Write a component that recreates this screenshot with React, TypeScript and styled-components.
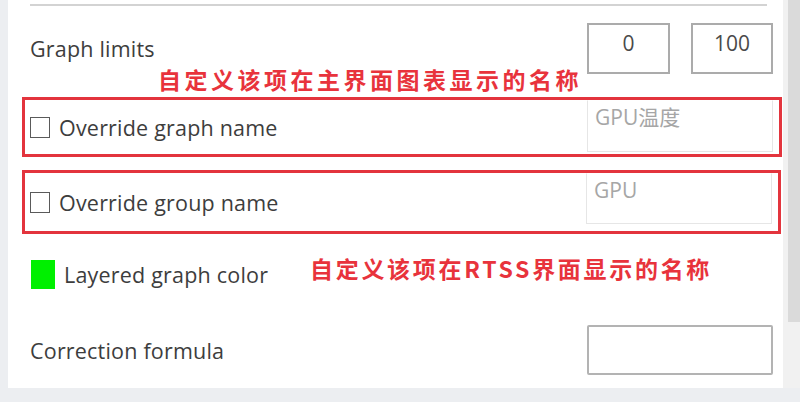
import React from 'react';
import styled, { createGlobalStyle } from 'styled-components';

const GlobalStyle = createGlobalStyle`
  html, body { margin: 0; padding: 0; background: #eceef1; }
  body { width: 800px; height: 402px; overflow: hidden; }
  * { box-sizing: border-box; }
`;

const Window = styled.div`
  width: 800px;
  height: 402px;
  display: flex;
  padding: 0 0 14px 8px;
  background: #eceef1;
`;

const Panel = styled.div`
  position: relative;
  flex: 1;
  display: flex;
  flex-direction: column;
  padding: 4px 1px 0 14px;
  background: #ffffff;
  font-family: "Open Sans", "Noto Sans", sans-serif;
  color: #3d3d3d;
`;

const ScrollTrack = styled.div`
  width: 17px;
  display: flex;
  flex-direction: column;
  align-items: flex-end;
  background: #f1f1f1;
`;

const ScrollThumb = styled.div`
  width: 12px;
  height: 322px;
  background: #dadada;
`;

const Divider = styled.div`
  height: 2px;
  margin: 0 15px 0 8px;
  background: #d3d3d3;
`;

const Row = styled.div<{ $mt: number; $h: number; $pl: number; $pr: number }>`
  display: flex;
  align-items: center;
  margin-top: ${(p) => p.$mt}px;
  height: ${(p) => p.$h}px;
  padding: 0 ${(p) => p.$pr}px 0 ${(p) => p.$pl}px;
`;

const Label = styled.span<{ $w?: number }>`
  font-size: 21.5px;
  letter-spacing: 0.2px;
  white-space: nowrap;
  ${(p) => (p.$w ? `width: ${p.$w}px; flex: none;` : '')}
`;

const Spacer = styled.div`
  flex: 1;
`;

const LimitBox = styled.div<{ $w: number; $ml?: number }>`
  width: ${(p) => p.$w}px;
  height: 51px;
  margin-left: ${(p) => p.$ml ?? 0}px;
  border: 2px solid #ababab;
  display: flex;
  justify-content: center;
  padding-top: 4px;
  font-size: 21px;
  line-height: 28px;
  color: #4a4a4a;
`;

const RedFrame = styled.div<{ $h: number }>`
  flex: 1;
  display: flex;
  align-items: center;
  height: ${(p) => p.$h}px;
  border: 3px solid #e3343d;
  padding: 0 6px 0 5px;
`;

const CheckBox = styled.div`
  width: 20px;
  height: 21px;
  border: 1.5px solid #5a5a5a;
  background: #fff;
  margin-right: 9px;
  flex: none;
`;

const NameInput = styled.div<{ $h: number; $mb: number }>`
  align-self: flex-start;
  width: 186px;
  height: ${(p) => p.$h}px;
  margin-bottom: ${(p) => p.$mb}px;
  border: 1px solid #e6e6e6;
  border-top-color: transparent;
  padding: 2px 0 0 7px;
  font-family: "Open Sans", "Noto Sans CJK SC", sans-serif;
  font-size: 21px;
  line-height: 28px;
  color: #a6a6a6;
`;

const Swatch = styled.div`
  width: 24px;
  height: 29px;
  background: #00f000;
  margin-right: 9px;
  flex: none;
`;

const Annotation = styled.span<{ $ls: number }>`
  font-family: "Noto Sans CJK SC", sans-serif;
  font-weight: 700;
  font-size: 23px;
  line-height: 26px;
  letter-spacing: ${(p) => p.$ls}px;
  color: #e8333c;
  white-space: nowrap;
`;

const TopAnnotation = styled(Annotation)`
  position: absolute;
  left: 150px;
  top: 66px;
`;

const SideAnnotation = styled(Annotation)`
  margin: -12px 0 0 -2px;
`;

const FormulaBox = styled.div`
  width: 186px;
  height: 50px;
  border: 2px solid #b3b3b3;
  border-radius: 2px;
`;

export default function App() {
  return (
    <>
      <GlobalStyle />
      <Window>
        <Panel>
          <Divider />
          <Row $mt={17} $h={51} $pl={8} $pr={9}>
            <Label>Graph limits</Label>
            <Spacer />
            <LimitBox $w={83}>0</LimitBox>
            <LimitBox $w={82} $ml={21}>100</LimitBox>
          </Row>
          <TopAnnotation $ls={3.5}>自定义该项在主界面图表显示的名称</TopAnnotation>

          <Row $mt={23} $h={60} $pl={0} $pr={0}>
            <RedFrame $h={60}>
              <CheckBox />
              <Label>Override graph name</Label>
              <Spacer />
              <NameInput $h={52} $mb={2}>GPU温度</NameInput>
            </RedFrame>
          </Row>

          <Row $mt={13} $h={64} $pl={0} $pr={1}>
            <RedFrame $h={64}>
              <CheckBox />
              <Label>Override group name</Label>
              <Spacer />
              <NameInput $h={51} $mb={7}>GPU</NameInput>
            </RedFrame>
          </Row>

          <Row $mt={22} $h={36} $pl={9} $pr={0}>
            <Swatch />
            <Label $w={248}>Layered graph color</Label>
            <SideAnnotation $ls={2.7}>自定义该项在RTSS界面显示的名称</SideAnnotation>
          </Row>

          <Row $mt={33} $h={50} $pl={8} $pr={9}>
            <Label>Correction formula</Label>
            <Spacer />
            <FormulaBox />
          </Row>
        </Panel>
        <ScrollTrack>
          <ScrollThumb />
        </ScrollTrack>
      </Window>
    </>
  );
}
